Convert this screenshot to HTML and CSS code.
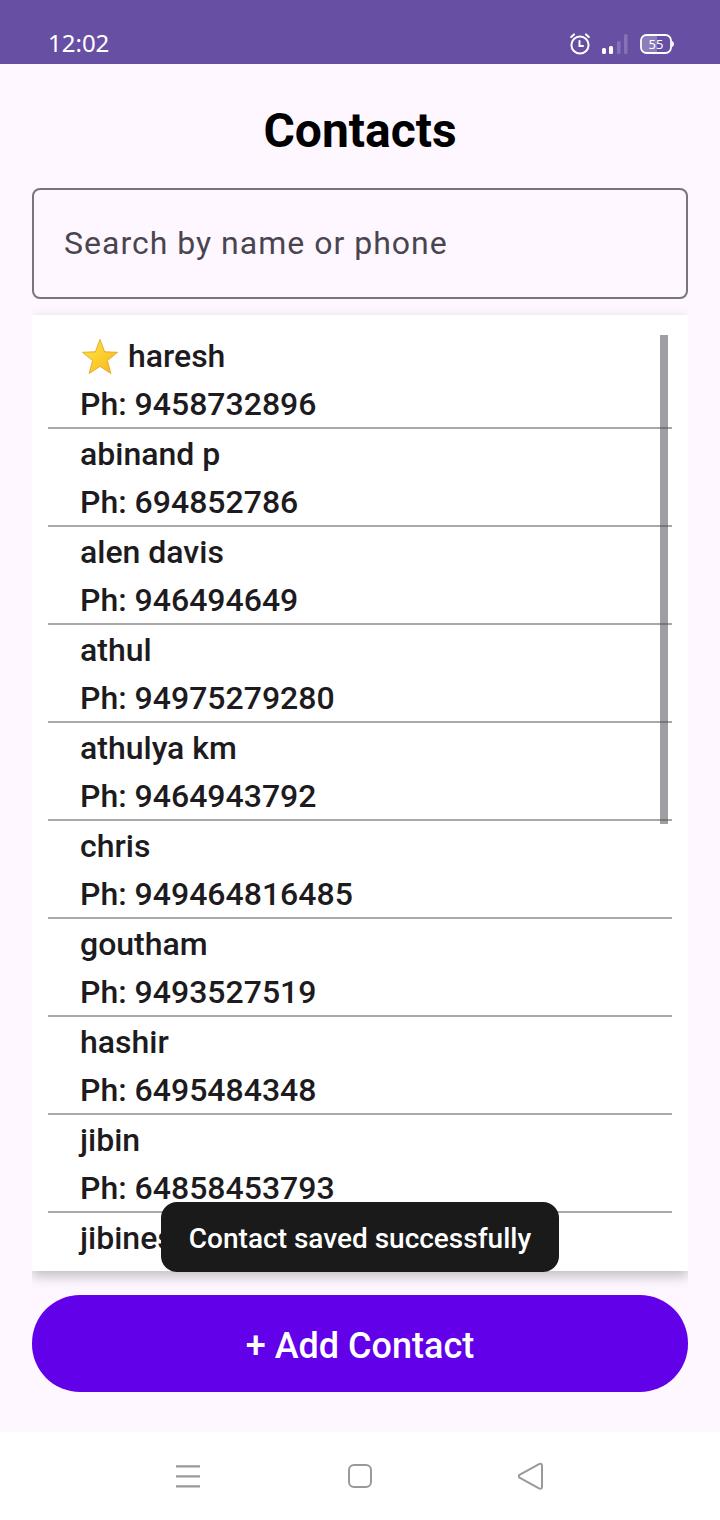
FILE: index.html
```html
<!DOCTYPE html>
<html lang="en">
<head>
<meta charset="utf-8">
<meta name="viewport" content="width=device-width, initial-scale=1">
<title>Contacts</title>
<link rel="stylesheet" href="styles.css">
</head>
<body class="screen">
<header class="status">
  <time class="clock">12:02</time>
  <div class="indicators">
    <svg class="alarm" width="20" height="22" viewBox="0 0 20 22" fill="none" stroke="#fff" stroke-width="2" stroke-linecap="round">
      <circle cx="10" cy="12" r="8.6"/>
      <path d="M9.500 8v5h3.500M1.200 4l2.800-2.600M18.800 4 16 1.400"/>
    </svg>
    <svg class="signal" width="26" height="22" viewBox="0 0 26 22" fill="#fff">
      <rect x="0" y="15" width="4" height="6" rx="1.500"/>
      <rect x="7" y="13" width="4" height="8" rx="1.500"/>
      <rect x="15" y="8" width="3.500" height="13" rx="1.500" opacity=".2"/>
      <rect x="22" y="1" width="3.500" height="20" rx="1.500" opacity=".2"/>
    </svg>
    <div class="battery">
      <svg width="34" height="20" viewBox="0 0 34 20">
        <path d="M6 2h11v16H6a4.500 4.500 0 0 1-4-4.500v-7A4.500 4.500 0 0 1 6 2z" fill="#fff" opacity=".25"/>
        <rect x="1" y="1" width="30" height="18" rx="5.500" fill="none" stroke="#fff" stroke-width="1.800"/>
        <path d="M31.500 6.500q2.500 1 2.500 3.500t-2.500 3.500z" fill="#fff"/>
      </svg>
      <span class="level">55</span>
    </div>
  </div>
</header>

<main class="page">
  <h1 class="title">Contacts</h1>
  <input class="search" type="search" placeholder="Search by name or phone" aria-label="Search by name or phone">
  <section class="card">
    <ul class="list">
      <li class="contact"><span class="line"><svg class="star" width="40" height="40" viewBox="0 0 40 40" role="img" aria-label="Favourite"><defs><linearGradient id="gold" x1="0" y1="0" x2="1" y2="1"><stop offset="0.200" stop-color="#fddd3a"/><stop offset="1" stop-color="#f9b51c"/></linearGradient></defs><path d="M20 2.500 24.600 14.800 37.500 15.300 27.400 23.500 30.800 36.500 20 29.300 9.200 36.500 12.600 23.500 2.500 15.300 15.400 14.800z" fill="url(#gold)" stroke="#e2ac30" stroke-width="1" stroke-linejoin="round"/></svg> haresh</span><span class="line">Ph: 9458732896</span></li>
      <li class="contact"><span class="line">abinand p</span><span class="line">Ph: 694852786</span></li>
      <li class="contact"><span class="line">alen davis</span><span class="line">Ph: 946494649</span></li>
      <li class="contact"><span class="line">athul</span><span class="line">Ph: 94975279280</span></li>
      <li class="contact"><span class="line">athulya km</span><span class="line">Ph: 9464943792</span></li>
      <li class="contact"><span class="line">chris</span><span class="line">Ph: 949464816485</span></li>
      <li class="contact"><span class="line">goutham</span><span class="line">Ph: 9493527519</span></li>
      <li class="contact"><span class="line">hashir</span><span class="line">Ph: 6495484348</span></li>
      <li class="contact"><span class="line">jibin</span><span class="line">Ph: 64858453793</span></li>
      <li class="contact"><span class="line">jibines</span></li>
    </ul>
    <div class="thumb"></div>
  </section>
  <button class="add" type="button">+ Add Contact</button>
</main>

<nav class="navbar">
  <button class="nav" type="button" aria-label="Recent apps">
    <svg width="28" height="28" viewBox="0 0 28 28" fill="none" stroke="#999" stroke-width="2.200"><path d="M2 4.300h24M2 14.300h24M2 24.300h24"/></svg>
  </button>
  <button class="nav" type="button" aria-label="Home">
    <svg width="28" height="28" viewBox="0 0 28 28" fill="none" stroke="#999" stroke-width="2"><rect x="3" y="3" width="22" height="22" rx="5"/></svg>
  </button>
  <button class="nav" type="button" aria-label="Back">
    <svg width="28" height="28" viewBox="0 0 28 28" fill="none" stroke="#999" stroke-width="2" stroke-linejoin="round"><path d="M1.500 12.800 21 2.200Q23.800 1 24 3.500V25Q23.800 27.500 21 26.300L1.500 15.700Q0 14.300 1.500 12.800z"/></svg>
  </button>
</nav>

<div class="toast" role="status">Contact saved successfully</div>
</body>
</html>
```
FILE: styles.css
```css
* {
  box-sizing: border-box;
}

.screen {
  position: relative;
  display: flex;
  flex-direction: column;
  height: 100vh;
  margin: 0;
  background: #fef7ff;
  color: #1d1b20;
  font-family: Roboto, sans-serif;
}

.status {
  display: flex;
  justify-content: space-between;
  align-items: flex-end;
  height: 64px;
  padding: 0 46px 9px 48px;
  background: #6750a3;
  color: #fff;
}

.clock {
  font: 24px/24px "Noto Sans", sans-serif;
}

.indicators {
  display: flex;
  align-items: center;
  gap: 12px;
}

.battery {
  position: relative;
  display: flex;
}

.level {
  position: absolute;
  inset: 0 2px 0 0;
  font: 13px/20px "Noto Sans", sans-serif;
  text-align: center;
}

.page {
  flex: 1;
  display: flex;
  flex-direction: column;
  min-height: 0;
  padding: 32px 32px 40px;
}

.title {
  margin: 0 0 22px;
  color: #000;
  font-size: 48px;
  line-height: 70px;
  font-weight: 700;
  text-align: center;
}

.search {
  width: 100%;
  height: 111px;
  margin: 0 0 16px;
  padding: 0 30px 2px;
  border: 2px solid #79747e;
  border-radius: 8px;
  background: transparent;
  color: #1d1b20;
  font: 32px "Roboto", sans-serif;
  letter-spacing: 1px;
  appearance: none;
}

.search::placeholder {
  color: #49454f;
  opacity: 1;
}

.card {
  position: relative;
  flex: 1;
  min-height: 0;
  margin-bottom: 24px;
  padding: 16px;
  background: #fff;
  box-shadow: 0 5px 12px rgba(0, 0, 0, 0.25);
  clip-path: inset(-16px 0 -24px);
}

.list {
  height: 100%;
  margin: 0;
  padding: 0;
  overflow-y: auto;
  scrollbar-width: none;
  list-style: none;
}

.contact {
  padding: 0 32px;
  border-bottom: 2px solid #a9a9a9;
  font-size: 32px;
  line-height: 50px;
  font-weight: 500;
}

.contact:last-child {
  border-bottom: 0;
}

.line {
  display: block;
  height: 48px;
}

.star {
  vertical-align: -10px;
}

.thumb {
  position: absolute;
  top: 20px;
  right: 20px;
  width: 8px;
  height: 489px;
  background: rgba(73, 69, 79, 0.52);
}

.add {
  height: 97px;
  padding: 4px 0 0;
  border: 0;
  border-radius: 48px;
  background: #6200ea;
  color: #fff;
  font: 500 36px Roboto, sans-serif;
}

.navbar {
  display: flex;
  justify-content: center;
  align-items: center;
  gap: 116px;
  height: 88px;
  background: #fff;
}

.nav {
  display: flex;
  justify-content: center;
  width: 56px;
  padding: 0;
  border: 0;
  background: none;
}

.toast {
  position: absolute;
  right: 0;
  bottom: 248px;
  left: 0;
  width: fit-content;
  margin: 0 auto;
  padding: 3px 28px 0;
  border-radius: 16px;
  background: #1a1a1a;
  color: #fff;
  font-size: 28px;
  line-height: 67px;
  font-weight: 500;
}
```
